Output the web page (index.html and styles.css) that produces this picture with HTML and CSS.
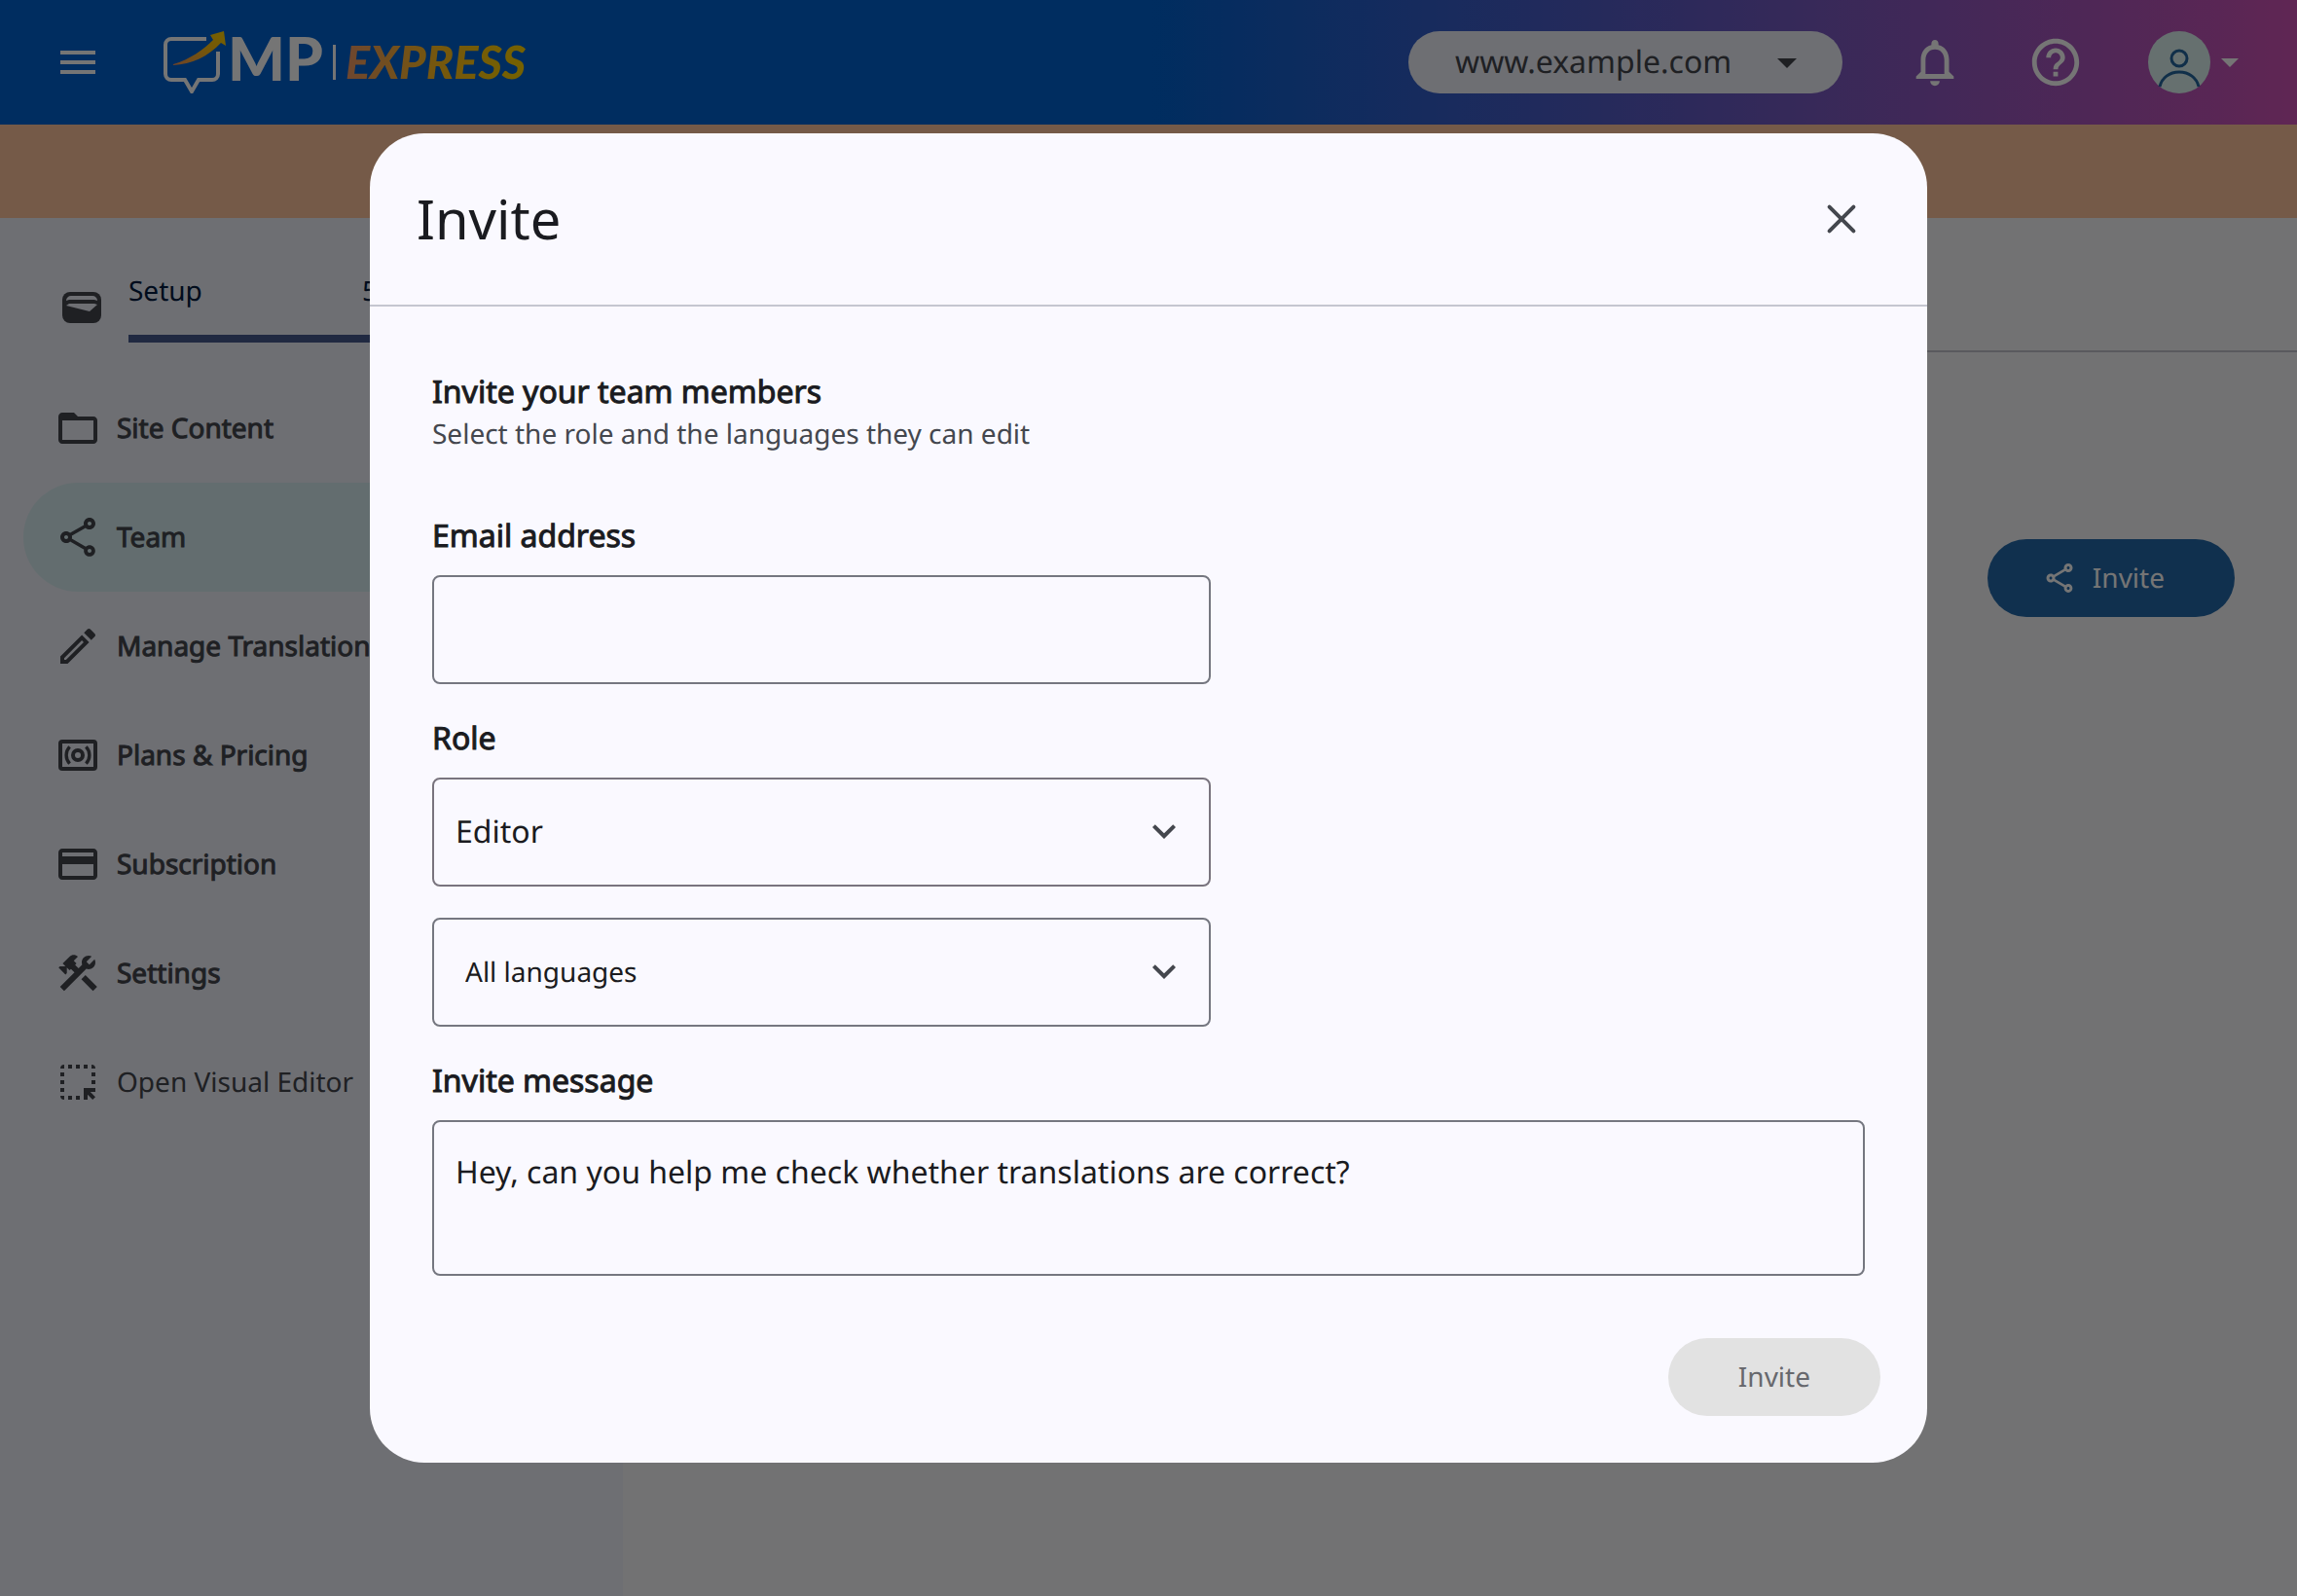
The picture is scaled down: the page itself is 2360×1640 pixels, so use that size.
FILE: index.html
```html
<!DOCTYPE html>
<html lang="en">
<head>
<meta charset="utf-8">
<meta name="viewport" content="width=device-width, initial-scale=1">
<title>MP Express - Team</title>
<link rel="stylesheet" href="styles.css">
</head>
<body>
<svg class="sprite" aria-hidden="true">
  <symbol id="i-share" viewBox="0 0 24 24"><path d="M18 16.08c-.76 0-1.44.3-1.96.77L8.91 12.7c.05-.23.09-.46.09-.7s-.04-.47-.09-.7l7.05-4.11c.54.5 1.25.81 2.04.81 1.66 0 3-1.34 3-3s-1.34-3-3-3-3 1.34-3 3c0 .24.04.47.09.7L8.04 9.81C7.5 9.31 6.79 9 6 9c-1.66 0-3 1.34-3 3s1.34 3 3 3c.79 0 1.5-.31 2.04-.81l7.12 4.16c-.05.21-.08.43-.08.65 0 1.61 1.31 2.92 2.92 2.92s2.92-1.31 2.92-2.92-1.31-2.92-2.92-2.92zM18 4c.55 0 1 .45 1 1s-.45 1-1 1-1-.45-1-1 .45-1 1-1zM6 13c-.55 0-1-.45-1-1s.45-1 1-1 1 .45 1 1-.45 1-1 1zm12 7.02c-.55 0-1-.45-1-1s.45-1 1-1 1 .45 1 1-.45 1-1 1z"/></symbol>
  <symbol id="i-chevron" viewBox="0 0 24 24"><path d="M7.41 8.59 12 13.17l4.59-4.58L18 10l-6 6-6-6z"/></symbol>
  <symbol id="i-drop" viewBox="0 0 24 24"><path d="M7 10l5 5 5-5z"/></symbol>
</svg>

<div class="app">
  <header class="topbar">
    <button class="icon-btn menu-btn" type="button" aria-label="Menu">
      <svg class="icon" viewBox="0 0 24 24"><path d="M3 18h18v-2H3v2zm0-5h18v-2H3v2zm0-7v2h18V6H3z"/></svg>
    </button>
    <a class="logo" href="#" aria-label="MP Express">
      <svg class="logo-mark" viewBox="0 0 66 64">
        <defs><linearGradient id="arrow" x1="0" y1="1" x2="1" y2="0"><stop offset="0" stop-color="#f0935a"/><stop offset=".6" stop-color="#ffc010"/><stop offset="1" stop-color="#ffd400"/></linearGradient></defs>
        <path d="M44 8H8a6 6 0 0 0-6 6v30a6 6 0 0 0 6 6h14l7 12 7-12h14a6 6 0 0 0 6-6V21" fill="none" stroke="#fff" stroke-width="4"/>
        <path d="M10 34C27 29 41 19 51 9l-3-5 14-4 2 15-5-3C46 26 29 34 10 35z" fill="url(#arrow)"/>
      </svg>
      <span class="logo-mp">MP</span>
      <span class="logo-rule"></span>
      <span class="logo-express">EXPRESS</span>
    </a>
    <div class="topbar-tools">
      <div class="site-picker">
        <select class="site-select" aria-label="Site"><option>www.example.com</option></select>
        <svg class="icon site-arrow"><use href="#i-drop"/></svg>
      </div>
      <button class="icon-btn" type="button" aria-label="Notifications">
        <svg class="icon-lg" viewBox="0 0 24 24"><path d="M12 22c1.100 0 2-.9 2-2h-4c0 1.100.9 2 2 2zm6-6v-5c0-3.070-1.630-5.640-4.500-6.320V4c0-.83-.67-1.500-1.500-1.500s-1.500.67-1.500 1.500v.68C7.640 5.360 6 7.920 6 11v5l-2 2v1h16v-1l-2-2zm-2 1H8v-6c0-2.480 1.510-4.500 4-4.500s4 2.020 4 4.500v6z"/></svg>
      </button>
      <button class="icon-btn" type="button" aria-label="Help">
        <svg class="icon-lg" viewBox="0 0 24 24"><path d="M11 18h2v-2h-2v2zm1-16C6.480 2 2 6.480 2 12s4.480 10 10 10 10-4.480 10-10S17.520 2 12 2zm0 18c-4.410 0-8-3.590-8-8s3.590-8 8-8 8 3.590 8 8-3.590 8-8 8zm0-14c-2.210 0-4 1.790-4 4h2c0-1.100.9-2 2-2s2 .9 2 2c0 2-3 1.750-3 5h2c0-2.250 3-2.500 3-5 0-2.210-1.790-4-4-4z"/></svg>
      </button>
      <button class="icon-btn account" type="button" aria-label="Account">
        <svg class="avatar" viewBox="0 0 64 64"><circle cx="32" cy="32" r="32" fill="#dff3f2"/><g fill="none" stroke="#24669f" stroke-width="3"><circle cx="32" cy="28" r="8"/><path d="M12 57C14 48 22 42 32 42s18 6 20 15"/></g></svg>
        <svg class="caret" viewBox="0 0 18 9"><path d="M0 0h18L9 9z"/></svg>
      </button>
    </div>
  </header>
  <div class="banner"></div>
  <div class="workspace">
    <nav class="sidebar" aria-label="Main">
      <a class="setup" href="#">
        <svg class="setup-icon" viewBox="0 0 40 32"><rect width="40" height="32" rx="8"/><path class="cut" d="M4 9a5 5 0 0 1 5-5h22a5 5 0 0 1 5 5l-3-1H7zM4 14l3-2h26l3 1-8 7z"/></svg>
        <span class="setup-body">
          <span class="setup-text"><span>Setup</span><span>5</span></span>
          <span class="setup-bar"></span>
        </span>
      </a>
      <a class="nav-item" href="#"><svg class="icon" viewBox="0 0 24 24"><path d="M20 6h-8l-2-2H4c-1.100 0-1.990.9-1.990 2L2 18c0 1.100.9 2 2 2h16c1.100 0 2-.9 2-2V8c0-1.100-.9-2-2-2zm0 12H4V8h16v10z"/></svg><span>Site Content</span></a>
      <a class="nav-item active" href="#"><svg class="icon"><use href="#i-share"/></svg><span>Team</span></a>
      <a class="nav-item" href="#"><svg class="icon" viewBox="0 0 24 24"><path d="M14.060 9.020l.92.92L5.920 19H5v-.92l9.060-9.060M17.660 3c-.25 0-.51.1-.7.29l-1.830 1.830 3.750 3.750 1.830-1.830c.39-.39.39-1.020 0-1.410l-2.340-2.340c-.2-.2-.45-.29-.71-.29zm-3.600 3.190L3 17.250V21h3.750L17.810 9.940l-3.750-3.750z"/></svg><span>Manage Translations</span></a>
      <a class="nav-item" href="#"><svg class="icon" viewBox="0 0 24 24"><g fill="none" stroke="currentColor"><rect x="3" y="5" width="18" height="14" rx="1" stroke-width="2"/><circle cx="12" cy="12" r="2.500" stroke-width="2"/><path d="M7.800 7.700a6.200 6.200 0 0 0 0 8.600M16.200 7.700a6.200 6.200 0 0 1 0 8.600" stroke-width="1.700"/></g></svg><span>Plans &amp; Pricing</span></a>
      <a class="nav-item" href="#"><svg class="icon" viewBox="0 0 24 24"><path d="M20 4H4c-1.110 0-1.990.89-1.990 2L2 18c0 1.110.89 2 2 2h16c1.110 0 2-.89 2-2V6c0-1.110-.89-2-2-2zm0 14H4v-6h16v6zm0-10H4V6h16v2z"/></svg><span>Subscription</span></a>
      <a class="nav-item" href="#"><svg class="icon" viewBox="0 0 24 24"><path d="M13.780 15.170l2.120-2.120 6 6-2.120 2.120zM17.500 10c1.930 0 3.500-1.570 3.500-3.500 0-.58-.16-1.120-.41-1.600l-2.700 2.700-1.490-1.490 2.700-2.700c-.48-.25-1.020-.41-1.600-.41C15.570 3 14 4.570 14 6.500c0 .41.08.8.21 1.160l-1.850 1.850-1.780-1.780.71-.71-1.410-1.410L12 3.490c-1.170-1.170-3.070-1.170-4.240 0L4.220 7.030l1.410 1.410H2.810l-.71.71 3.540 3.540.71-.71V9.150l1.410 1.410.71-.71 1.780 1.780-7.410 7.410 2.120 2.120L16.340 9.790c.36.13.75.21 1.160.21z"/></svg><span>Settings</span></a>
      <a class="nav-item plain" href="#"><svg class="icon" viewBox="0 0 24 24"><path d="M5 3v2H3a2 2 0 0 1 2-2zM7 3h2v2H7zM11 3h2v2h-2zM15 3h2v2h-2zM19 3a2 2 0 0 1 2 2h-2zM3 7h2v2H3zM3 11h2v2H3zM3 15h2v2H3zM3 19h2v2a2 2 0 0 1-2-2zM7 19h2v2H7zM11 19h2v2h-2zM19 7h2v2h-2zM19 11h2v2h-2zM15 15h6v2h-2.600l2.600 2.600-1.400 1.400-2.600-2.600V21h-2z"/></svg><span>Open Visual Editor</span></a>
    </nav>
    <main class="content">
      <div class="content-head"></div>
      <div class="content-body">
        <button class="btn btn-primary" type="button"><svg class="icon-sm"><use href="#i-share"/></svg><span>Invite</span></button>
      </div>
    </main>
  </div>
</div>

<div class="scrim">
  <section class="dialog" role="dialog" aria-modal="true" aria-labelledby="dialog-title">
    <div class="dialog-head">
      <h1 class="dialog-title" id="dialog-title">Invite</h1>
      <button class="icon-btn close-btn" type="button" aria-label="Close">
        <svg class="icon" viewBox="0 0 24 24"><path d="M5.800 5.800l12.400 12.400M18.200 5.800L5.800 18.200" fill="none" stroke="currentColor" stroke-width="2" stroke-linecap="round"/></svg>
      </button>
    </div>
    <form class="dialog-body">
      <div class="intro">
        <h2 class="heading">Invite your team members</h2>
        <p class="hint">Select the role and the languages they can edit</p>
      </div>
      <div class="field">
        <label class="heading" for="email">Email address</label>
        <input class="control" id="email" type="email">
      </div>
      <div class="field">
        <label class="heading" for="role">Role</label>
        <div class="select-wrap">
          <select class="control control-role" id="role"><option>Editor</option></select>
          <svg class="select-chevron icon"><use href="#i-chevron"/></svg>
        </div>
      </div>
      <div class="field">
        <div class="select-wrap">
          <select class="control control-small" aria-label="Languages"><option>All languages</option></select>
          <svg class="select-chevron icon"><use href="#i-chevron"/></svg>
        </div>
      </div>
      <div class="field field-wide">
        <label class="heading" for="message">Invite message</label>
        <textarea class="control control-area" id="message">Hey, can you help me check whether translations are correct?</textarea>
      </div>
    </form>
    <div class="dialog-actions">
      <button class="btn btn-disabled" type="button" disabled>Invite</button>
    </div>
  </section>
</div>
</body>
</html>
```

FILE: styles.css
```css
* { box-sizing: border-box; }

html, body { height: 100%; }

body {
  margin: 0;
  font-family: "Noto Sans", sans-serif;
  font-size: 28px;
  line-height: 38px;
  color: #1a1b20;
  text-rendering: geometricPrecision;
}

h1, h2, p { margin: 0; }
a { color: inherit; text-decoration: none; }
button, input, select, textarea { font: inherit; color: inherit; text-rendering: inherit; }

.sprite { display: none; }
.icon, .icon-lg, .icon-sm { display: block; flex: none; fill: currentColor; }
.icon { width: 48px; height: 48px; }
.icon-lg { width: 58px; height: 58px; }
.icon-sm { width: 36px; height: 36px; }

.icon-btn {
  display: flex;
  align-items: center;
  padding: 0;
  border: 0;
  background: none;
}

.app { min-height: 100%; display: flex; flex-direction: column; }

/* Top bar */
.topbar {
  display: flex;
  align-items: center;
  height: 128px;
  padding: 0 60px 0 56px;
  color: #fff;
  background: linear-gradient(90deg, #0062d1 50%, #d153b7 100%);
}
.logo { display: flex; align-items: center; height: 64px; margin-left: 64px; }
.logo-mark { width: 66px; height: 64px; }
.logo-mp { padding-bottom: 8px; font: 900 62px/56px Lato, sans-serif; }
.logo-rule { width: 3px; height: 36px; margin: 0 10px; background: #fff; }
.logo-express {
  font: italic 900 47px/56px Lato, sans-serif;
  color: transparent;
  background: linear-gradient(90deg, #f09a68, #ffbd20 50%, #ffd400);
  -webkit-background-clip: text;
  background-clip: text;
}
.topbar-tools { display: flex; align-items: center; gap: 66px; margin-left: auto; }
.site-picker { position: relative; width: 446px; }
.site-select {
  display: block;
  width: 100%;
  height: 64px;
  padding: 0 96px 0 48px;
  border: 0;
  border-radius: 32px;
  appearance: none;
  background: #eff1fa;
  color: #44474e;
  font-size: 32px;
}
.site-arrow { position: absolute; top: 8px; right: 33px; color: #44474e; pointer-events: none; }
.account { gap: 11px; }
.avatar { width: 64px; height: 64px; }
.caret { width: 18px; height: 9px; fill: currentColor; }

.banner { height: 96px; background: #ffc59e; }

/* Workspace */
.workspace { flex: 1; display: flex; }
.sidebar {
  flex: none;
  width: 640px;
  padding: 56px 24px;
  background: #eff1fa;
  color: #44474e;
}
.setup { display: flex; gap: 28px; height: 104px; padding-left: 40px; }
.setup-icon { width: 40px; height: 32px; margin-top: 20px; fill: currentColor; }
.setup-icon .cut { fill: #eff1fa; }
.setup-body { flex: 1; display: grid; gap: 26px; align-content: start; }
.setup-text { display: grid; grid-template-columns: 240px 1fr; color: #001b3f; }
.setup-bar { height: 8px; background: #465a8e; }
.nav-item {
  display: flex;
  align-items: center;
  gap: 16px;
  height: 112px;
  padding-left: 32px;
  border-radius: 56px;
  -webkit-text-stroke: 1px currentColor;
}
.nav-item.plain { -webkit-text-stroke: 0; }
.nav-item.active { background: #d8eef2; }

.content { flex: 1; background: #f8f8fa; }
.content-head { height: 138px; border-bottom: 2px solid #c4c5cc; }
.content-body { display: flex; justify-content: flex-end; padding: 192px 64px 64px; }

.btn { display: flex; align-items: center; height: 80px; border: 0; border-radius: 40px; }
.btn-primary { gap: 16px; padding: 0 72px 0 56px; background: #246aab; color: #fff; }
.btn-disabled { padding: 0 72px; background: #e2e2e2; color: #67686d; }

/* Dialog */
.scrim {
  position: fixed;
  inset: 0;
  display: flex;
  align-items: center;
  justify-content: center;
  padding: 64px;
  background: rgba(0, 0, 0, 0.54);
}
.dialog {
  width: 100%;
  max-width: 1600px;
  border-radius: 56px;
  background: #faf9ff;
}
.dialog-head {
  display: flex;
  align-items: center;
  justify-content: space-between;
  height: 178px;
  padding: 0 64px 0 48px;
  border-bottom: 2px solid #c5c6d0;
}
.dialog-title { font-size: 56px; font-weight: 400; line-height: 72px; }
.close-btn { color: #44474e; }
.dialog-body { display: flex; flex-direction: column; gap: 32px; padding: 64px; }
.intro { padding-bottom: 30px; }
.heading {
  font-size: 32px;
  font-weight: 400;
  line-height: 48px;
  -webkit-text-stroke: 1px currentColor;
}
.hint { color: #44474e; }
.field { display: flex; flex-direction: column; gap: 16px; max-width: 800px; }
.field-wide { max-width: none; }
.control {
  display: block;
  width: 100%;
  height: 112px;
  padding: 0 22px;
  border: 2px solid #757780;
  border-radius: 8px;
  appearance: none;
  background: transparent;
  font-size: 32px;
  line-height: 48px;
}
.control-role { border-color: #79747e; }
.control-small { padding-left: 32px; font-size: 28px; }
.control-area { height: 160px; padding: 28px 22px; resize: none; }
.select-wrap { position: relative; }
.select-chevron { position: absolute; top: 31px; right: 24px; color: #44474e; pointer-events: none; }
.dialog-actions { display: flex; justify-content: flex-end; padding: 0 48px 48px; }
```
